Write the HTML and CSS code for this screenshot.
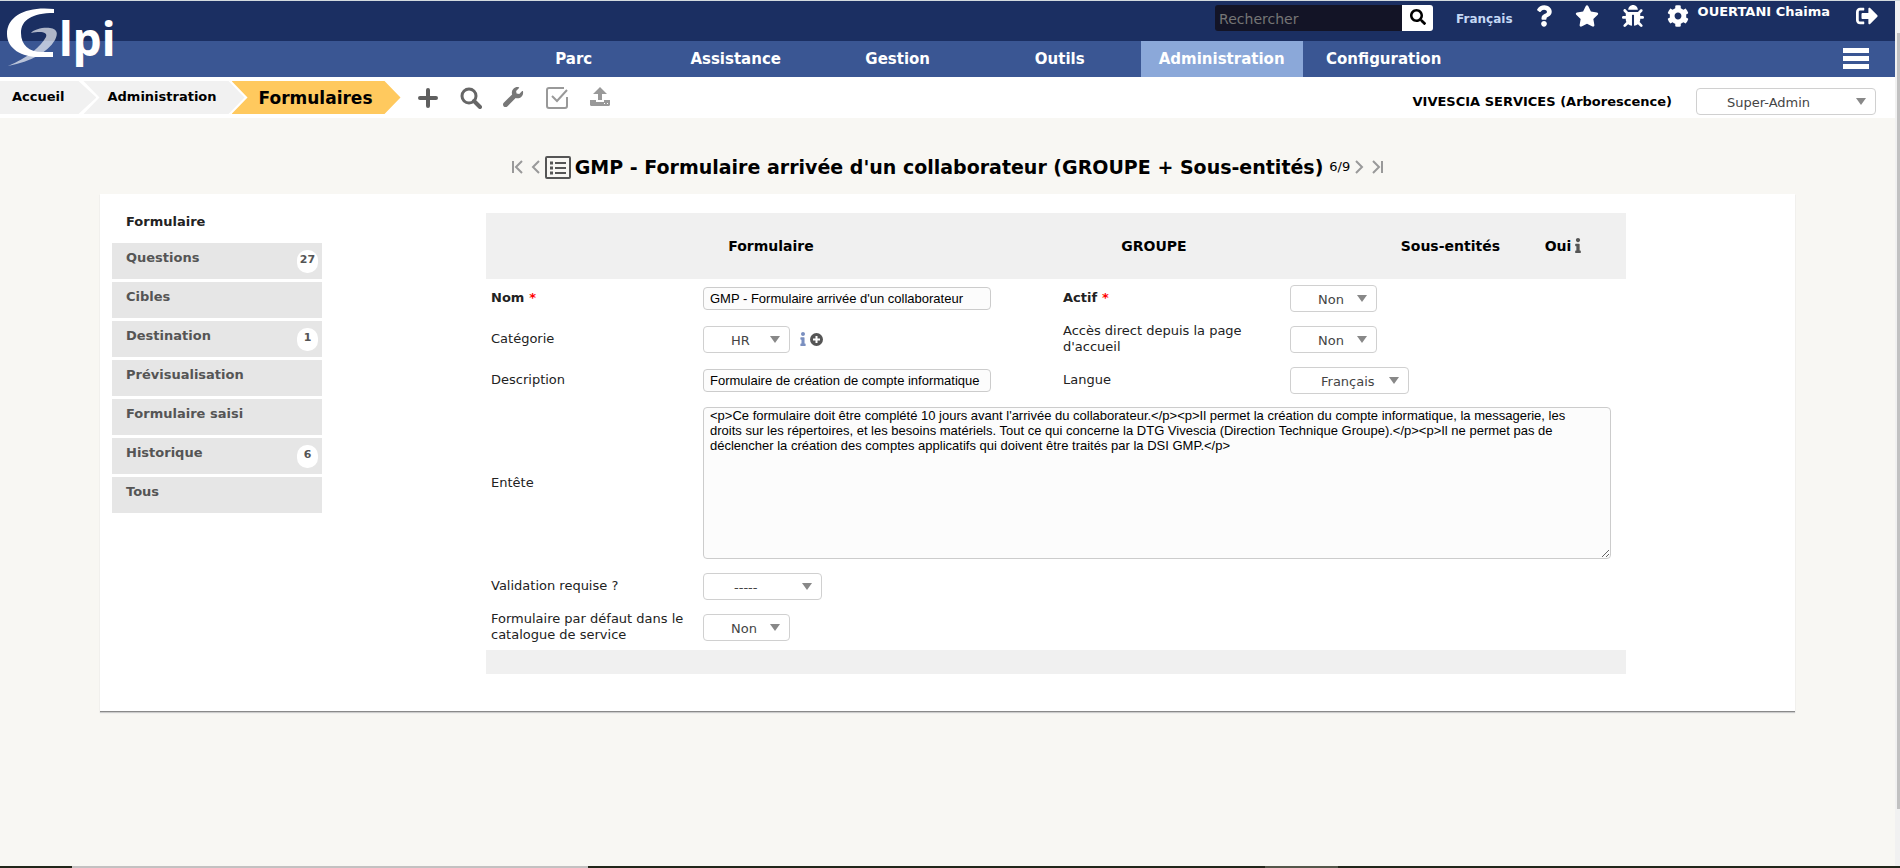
FILE: index.html
```html
<!DOCTYPE html>
<html lang="fr">
<head>
<meta charset="utf-8">
<title>GLPI - Formulaires</title>
<link rel="stylesheet" href="styles.css">
</head>
<body>
<div class="window">
<div class="page">
  <header class="header">
    <div class="topbar">
      <a href="#" class="logo" aria-label="Glpi">
        <svg viewBox="0 1 120 70" width="120" height="70">
          <path d="M54 9C28 6 7 15 7 34c0 15 15 23 32 23h14v-5H42C29 52 21 45 21 33c0-13 11-20 33-20z" fill="#fff"/>
          <path d="M31 33c3-4 13-6 19-5 8 1 8 6 5 12C47 53 32 61 8 66c20-8 33-20 38-29 2-5-5-6-15-4z" fill="#fff" opacity=".65"/>
          <text class="logo-text" x="59" y="56">lpi</text>
        </svg>
      </a>
      <form class="search">
        <input type="text" class="search-input" placeholder="Rechercher" aria-label="Rechercher">
        <button type="button" class="search-button" aria-label="Lancer la recherche"><svg viewBox="0 0 512 512" width="16" height="16"><path d="M505 442.700L405.300 343c-4.500-4.500-10.600-7-17-7H372c27.600-35.300 44-79.700 44-128C416 93.100 322.900 0 208 0S0 93.100 0 208s93.100 208 208 208c48.300 0 92.700-16.400 128-44v16.300c0 6.400 2.500 12.500 7 17l99.700 99.700c9.400 9.400 24.600 9.400 33.900 0l28.300-28.300c9.400-9.400 9.400-24.600.1-34zM208 336c-70.700 0-128-57.200-128-128 0-70.700 57.200-128 128-128 70.700 0 128 57.200 128 128 0 70.700-57.200 128-128 128z"/></svg></button>
      </form>
      <a href="#" class="language">Français</a>
      <div class="tools">
        <a href="#" class="tool" aria-label="Aide"><svg viewBox="0 0 384 512" width="16" height="22"><path d="M202.021 0C122.202 0 70.503 32.703 29.914 91.026c-7.363 10.580-5.093 25.086 5.178 32.874l43.138 32.709c10.373 7.865 25.132 6.026 33.253-4.148 25.049-31.381 43.630-49.449 82.757-49.449 30.764 0 68.816 19.799 68.816 49.631 0 22.552-18.617 34.134-48.993 51.164-35.423 19.860-82.299 44.576-82.299 106.405V320c0 13.255 10.745 24 24 24h72.471c13.255 0 24-10.745 24-24v-5.773c0-42.860 125.268-44.645 125.268-160.627C377.504 66.256 286.902 0 202.021 0zM192 373.459c-38.196 0-69.271 31.075-69.271 69.271 0 38.195 31.075 69.270 69.271 69.270s69.271-31.075 69.271-69.271-31.075-69.270-69.271-69.270z"/></svg></a>
        <a href="#" class="tool" aria-label="Marque-pages"><svg viewBox="0 0 576 512" width="24" height="22"><path d="M259.300 17.800L194 150.200 47.900 171.500c-26.200 3.800-36.700 36.100-17.700 54.600l105.700 103-25 145.500c-4.500 26.300 23.200 46 46.400 33.700L288 439.600l130.700 68.700c23.200 12.200 50.900-7.400 46.400-33.700l-25-145.500 105.700-103c19-18.500 8.500-50.800-17.700-54.600L382 150.200 316.700 17.800c-11.700-23.600-45.600-23.900-57.400 0z"/></svg></a>
        <a href="#" class="tool" aria-label="Mode debug"><svg viewBox="0 0 512 512" width="22" height="22"><path d="M511.988 288.900c-.478 17.430-15.217 31.100-32.653 31.100H424v16c0 21.864-4.882 42.584-13.600 61.145l60.228 60.228c12.496 12.497 12.496 32.758 0 45.255-12.498 12.497-32.759 12.496-45.256 0l-54.736-54.736C345.886 467.965 314.351 480 280 480V236c0-6.627-5.373-12-12-12h-24c-6.627 0-12 5.373-12 12v244c-34.351 0-65.886-12.035-90.636-32.108l-54.736 54.736c-12.498 12.497-32.759 12.496-45.256 0-12.496-12.497-12.496-32.758 0-45.255l60.228-60.228C92.882 378.584 88 357.864 88 336v-16H32.666C15.230 320 .491 306.330.013 288.900-.484 270.816 14.028 256 32 256h56v-58.745l-46.628-46.628c-12.496-12.497-12.496-32.758 0-45.255 12.498-12.497 32.758-12.497 45.256 0L141.255 160h229.489l54.627-54.627c12.498-12.497 32.758-12.497 45.256 0 12.496 12.497 12.496 32.758 0 45.255L424 197.255V256h56c17.972 0 32.484 14.816 31.988 32.900zM257 0c-61.856 0-112 50.144-112 112h224C369 50.144 318.856 0 257 0z"/></svg></a>
        <a href="#" class="user"><svg viewBox="0 0 512 512" width="22" height="22"><path d="M487.400 315.700l-42.600-24.600c4.300-23.200 4.300-47 0-70.200l42.600-24.600c4.900-2.800 7.100-8.600 5.500-14-11.100-35.600-30-67.800-54.700-94.600-3.800-4.100-10-5.100-14.800-2.300L380.800 110c-17.900-15.400-38.500-27.300-60.800-35.100V25.800c0-5.600-3.900-10.500-9.400-11.700-36.700-8.200-74.300-7.800-109.200 0-5.500 1.200-9.400 6.100-9.400 11.700V75c-22.200 7.900-42.800 19.800-60.800 35.100L88.700 85.500c-4.900-2.800-11-1.900-14.800 2.300-24.700 26.700-43.600 58.900-54.700 94.600-1.700 5.400.6 11.200 5.500 14L67.300 221c-4.300 23.200-4.300 47 0 70.200l-42.600 24.600c-4.900 2.800-7.100 8.600-5.500 14 11.100 35.600 30 67.800 54.700 94.600 3.800 4.100 10 5.100 14.800 2.300l42.600-24.600c17.900 15.400 38.500 27.300 60.800 35.100v49.200c0 5.600 3.900 10.500 9.400 11.700 36.700 8.200 74.300 7.800 109.200 0 5.500-1.200 9.400-6.100 9.400-11.700v-49.200c22.200-7.900 42.800-19.800 60.800-35.100l42.600 24.600c4.900 2.800 11 1.900 14.800-2.300 24.700-26.700 43.600-58.900 54.700-94.600 1.500-5.500-.7-11.300-5.600-14.100zM256 336c-44.100 0-80-35.900-80-80s35.900-80 80-80 80 35.900 80 80-35.900 80-80 80z"/></svg><span class="user-name">OUERTANI Chaima</span></a>
        <a href="#" class="tool" aria-label="Déconnexion"><svg viewBox="0 0 512 512" width="22" height="22"><path d="M497 273L329 441c-15 15-41 4.500-41-17v-96H152c-13.300 0-24-10.700-24-24v-96c0-13.300 10.700-24 24-24h136V88c0-21.400 25.900-32 41-17l168 168c9.300 9.400 9.300 24.600 0 34zM192 436v-40c0-6.600-5.400-12-12-12H96c-17.700 0-32-14.300-32-32V160c0-17.700 14.300-32 32-32h84c6.600 0 12-5.400 12-12V76c0-6.600-5.400-12-12-12H96c-53 0-96 43-96 96v192c0 53 43 96 96 96h84c6.600 0 12-5.400 12-12z"/></svg></a>
      </div>
    </div>
    <nav class="nav">
      <a href="#">Parc</a>
      <a href="#">Assistance</a>
      <a href="#">Gestion</a>
      <a href="#">Outils</a>
      <a href="#" class="active">Administration</a>
      <a href="#">Configuration</a>
      <button type="button" class="burger" aria-label="Menu"><svg viewBox="0 0 26 22" width="26" height="22"><path d="M0 0h26v5H0zM0 8h26v5H0zM0 16h26v5H0z" fill="#fff"/></svg></button>
    </nav>
  </header>

  <div class="context">
    <nav class="crumbs">
      <a href="#" class="crumb first">Accueil</a>
      <a href="#" class="crumb">Administration</a>
      <a href="#" class="crumb current">Formulaires</a>
    </nav>
    <div class="actions">
      <a href="#" aria-label="Ajouter"><svg viewBox="0 0 22 22" width="22" height="22"><path d="M11 3v16M3 11h16" stroke="#5f5f5f" stroke-width="4" stroke-linecap="round"/></svg></a>
      <a href="#" aria-label="Rechercher"><svg viewBox="0 0 22 22" width="22" height="22"><circle cx="9" cy="9" r="7" fill="none" stroke="#666" stroke-width="3"/><path d="M14 14l6 6" stroke="#666" stroke-width="4" stroke-linecap="round"/></svg></a>
      <a href="#" aria-label="Configurer"><svg viewBox="0 0 560 560" width="22" height="22"><path fill="#777" d="M507.730 109.100c-2.240-9.030-13.540-12.090-20.120-5.510l-74.360 74.360-67.880-11.310-11.310-67.880 74.360-74.360c6.620-6.620 3.430-17.900-5.660-20.160-47.380-11.740-99.550.91-136.580 37.930-39.640 39.640-50.550 97.100-34.050 147.200L18.740 402.760c-24.990 24.990-24.990 65.510 0 90.500 24.990 24.990 65.510 24.990 90.500 0l213.210-213.210c50.120 16.710 107.470 5.680 147.370-34.220 37.070-37.070 49.700-89.320 37.910-136.730z"/></svg></a>
      <a href="#" aria-label="Valider"><svg viewBox="0 0 22 22" width="22" height="22" fill="none" stroke="#999" stroke-width="2"><path d="M18 1H3a2 2 0 0 0-2 2v16a2 2 0 0 0 2 2h16a2 2 0 0 0 2-2v-9"/><path d="M6 9l5 5L21 3"/></svg></a>
      <a href="#" aria-label="Exporter"><svg viewBox="0 0 22 22" width="22" height="22" fill="#999"><path d="M11 0l7 7h-5v6H9V7H4z"/><path fill-rule="evenodd" d="M1 13h6v2h8v-2h6v5a2 2 0 0 1-1 1H2a2 2 0 0 1-1-1zM15 16v1h1v-1zM18 16v1h1v-1z"/></svg></a>
    </div>
    <a href="#" class="entity">VIVESCIA SERVICES (Arborescence)</a>
    <select class="select profile" aria-label="Profil"><option>Super-Admin</option></select>
  </div>

  <main class="main">
    <div class="title-row">
      <a href="#" class="pager" aria-label="Premier"><svg viewBox="0 0 12 14" width="12" height="14"><path d="M1 1v12M10 1L4 7l6 6"/></svg></a>
      <a href="#" class="pager" aria-label="Précédent"><svg viewBox="0 0 12 14" width="12" height="14"><path d="M9 1L3 7l6 6"/></svg></a>
      <svg class="title-icon" viewBox="0 0 26 23" width="26" height="23"><rect x="1" y="1" width="24" height="21" rx="1" fill="none" stroke="#555" stroke-width="2"/><path d="M10 7h11M10 12h11M10 17h11" stroke="#555" stroke-width="2"/><path d="M5 7h3M5 12h3M5 17h3" stroke="#555" stroke-width="3"/></svg>
      <h1 class="title">GMP - Formulaire arrivée d'un collaborateur (GROUPE + Sous-entités)</h1>
      <span class="count">6/9</span>
      <a href="#" class="pager" aria-label="Suivant"><svg viewBox="0 0 12 14" width="12" height="14"><path d="M3 1l6 6-6 6"/></svg></a>
      <a href="#" class="pager" aria-label="Dernier"><svg viewBox="0 0 12 14" width="12" height="14"><path d="M2 1l6 6-6 6M11 1v12"/></svg></a>
    </div>

    <section class="panel">
      <nav class="tabs">
        <a href="#" class="tab selected">Formulaire</a>
        <a href="#" class="tab">Questions<span class="badge">27</span></a>
        <a href="#" class="tab">Cibles</a>
        <a href="#" class="tab">Destination<span class="badge">1</span></a>
        <a href="#" class="tab">Prévisualisation</a>
        <a href="#" class="tab">Formulaire saisi</a>
        <a href="#" class="tab">Historique<span class="badge">6</span></a>
        <a href="#" class="tab">Tous</a>
      </nav>

      <div class="content">
      <form class="form">
        <div class="form-head">
          <span>Formulaire</span>
          <span>GROUPE</span>
          <span class="sub">Sous-entités</span>
          <span class="yes">Oui <svg viewBox="0 0 192 512" width="6" height="15" fill="#555"><path d="M20 424.229h20V279.771H20c-11.046 0-20-8.954-20-20V212c0-11.046 8.954-20 20-20h112c11.046 0 20 8.954 20 20v212.229h20c11.046 0 20 8.954 20 20V492c0 11.046-8.954 20-20 20H20c-11.046 0-20-8.954-20-20v-47.771c0-11.046 8.954-20 20-20zM96 0C56.235 0 24 32.235 24 72s32.235 72 72 72 72-32.235 72-72S135.764 0 96 0z"/></svg></span>
        </div>
        <div class="fields">
          <label for="nom" class="required">Nom <em>*</em></label>
          <div><input id="nom" class="text" type="text" value="GMP - Formulaire arrivée d'un collaborateur"></div>
          <label for="actif" class="required">Actif <em>*</em></label>
          <div><select id="actif" class="select small"><option>Non</option></select></div>

          <label for="categorie">Catégorie</label>
          <div class="with-icons"><select id="categorie" class="select small"><option>HR</option></select>
            <a href="#" class="mini info" aria-label="Information"><svg viewBox="0 0 192 512" width="6" height="14" fill="#7a8fc0"><path d="M20 424.229h20V279.771H20c-11.046 0-20-8.954-20-20V212c0-11.046 8.954-20 20-20h112c11.046 0 20 8.954 20 20v212.229h20c11.046 0 20 8.954 20 20V492c0 11.046-8.954 20-20 20H20c-11.046 0-20-8.954-20-20v-47.771c0-11.046 8.954-20 20-20zM96 0C56.235 0 24 32.235 24 72s32.235 72 72 72 72-32.235 72-72S135.764 0 96 0z"/></svg></a>
            <a href="#" class="mini" aria-label="Ajouter une catégorie"><svg viewBox="0 0 13 13" width="13" height="13"><circle cx="6.500" cy="6.500" r="6.500" fill="#555"/><path d="M6.500 3v7M3 6.500h7" stroke="#fff" stroke-width="2"/></svg></a></div>
          <label for="acces">Accès direct depuis la page d'accueil</label>
          <div><select id="acces" class="select small"><option>Non</option></select></div>

          <label for="description">Description</label>
          <div><input id="description" class="text" type="text" value="Formulaire de création de compte informatique"></div>
          <label for="langue">Langue</label>
          <div><select id="langue" class="select medium"><option>Français</option></select></div>

          <label for="entete">Entête</label>
          <div class="wide tall"><textarea id="entete" class="text area">&lt;p&gt;Ce formulaire doit être complété 10 jours avant l'arrivée du collaborateur.&lt;/p&gt;&lt;p&gt;Il permet la création du compte informatique, la messagerie, les droits sur les répertoires, et les besoins matériels. Tout ce qui concerne la DTG Vivescia (Direction Technique Groupe).&lt;/p&gt;&lt;p&gt;Il ne permet pas de déclencher la création des comptes applicatifs qui doivent être traités par la DSI GMP.&lt;/p&gt;</textarea></div>

          <label for="validation">Validation requise ?</label>
          <div class="wide"><select id="validation" class="select medium"><option>-----</option></select></div>

          <label for="defaut">Formulaire par défaut dans le catalogue de service</label>
          <div class="wide"><select id="defaut" class="select small"><option>Non</option></select></div>
        </div>
        <div class="form-foot"></div>
      </form>
      </div>
    </section>
  </main>
</div>
<div class="scrollbar"><div class="thumb"></div></div>
</div>
<div class="taskbar"></div>
</body>
</html>
```

FILE: styles.css
```css
* { box-sizing: border-box; }

body {
  margin: 0;
  min-height: 100vh;
  display: flex;
  flex-direction: column;
  background: #f8f7f3;
  color: #222;
  font: 13px/16px Verdana, "DejaVu Sans", sans-serif;
}

a { color: inherit; text-decoration: none; }
button, input, select, textarea { font: inherit; margin: 0; }
svg { display: block; flex: none; }

.window { flex: 1; display: flex; border-top: 1px solid #d3dade; }
.page { flex: 1; min-width: 0; }
.scrollbar { width: 5px; padding: 32px 0 57px 2px; background: #f1f1f1; display: flex; }
.thumb { flex: 1; background: #c1c1c1; }
.taskbar {
  height: 2px;
  background: linear-gradient(90deg, #22261a 72px, #c3c1c1 72px, #c3c1c1 588px, #22261a 588px, #22261a 1265px, #55574a 1265px, #55574a 1338px, #22261a 1338px);
}

/* Header */
.topbar { position: relative; height: 40px; padding: 4px 17px 0 0; display: flex; align-items: flex-start; justify-content: flex-end; background: #1b2f62; }
.logo { position: absolute; left: 0; top: 0; }
.logo-text { font: bold 46px "Noto Sans", sans-serif; fill: #fff; }
.search { display: flex; height: 26px; width: 218px; border-radius: 3px; overflow: hidden; }
.search-input { flex: 1; min-width: 0; padding: 2px 4px 0; border: 0; background: #131426; color: #ccc; font-size: 14px; }
.search-input::placeholder { color: #757575; opacity: 1; }
.search-button { width: 31px; padding: 0 0 2px; border: 0; background: #fff; display: flex; align-items: center; justify-content: center; }
.language { margin: 6px 23px 0; color: #c5d8f5; font-size: 12px; font-weight: bold; }
.tools { display: flex; gap: 23px; color: #fff; fill: #fff; }
.user { display: flex; gap: 9px; margin-right: 3px; font-weight: bold; font-size: 13px; line-height: 14px; }

.nav { height: 36px; padding: 0 26px 0 26%; display: flex; align-items: stretch; background: #3a5693; }
.nav a { width: 162px; color: #fff; font-size: 15px; font-weight: bold; line-height: 36px; text-align: center; }
.nav .active { background: #8ba8d9; }
.burger { margin-left: auto; padding: 0; border: 0; background: none; align-self: center; }

/* Breadcrumb */
.context { display: flex; align-items: center; height: 41px; padding-right: 19px; background: #fff; color: #000; }
.crumbs { display: flex; font-weight: bold; line-height: 32px; }
.crumb { height: 33px; padding: 0 28px 0 24px; background: #f1f1f1; clip-path: polygon(0 0, calc(100% - 16px) 0, 100% 50%, calc(100% - 16px) 100%, 0 100%, 16px 50%); }
.crumb + .crumb { margin-left: -13px; }
.crumb.first { padding: 0 32px 0 12px; clip-path: polygon(0 0, calc(100% - 18px) 0, 100% 50%, calc(100% - 18px) 100%, 0 100%); }
.crumb.current { padding-left: 27px; background: #ffc95e; font-size: 17px; line-height: 34px; }
.actions { display: flex; gap: 21px; margin-left: 16px; }
.entity { margin-left: auto; padding-top: 8px; font-weight: bold; }

/* Form controls */
.select {
  height: 27px;
  padding: 3px 24px 0 27px;
  border: 1px solid #d0d0d0;
  border-radius: 4px;
  appearance: none;
  background: #fff url("data:image/svg+xml,%3Csvg xmlns='http://www.w3.org/2000/svg' width='10' height='7'%3E%3Cpath d='M0 0h10L5 7z' fill='%23888'/%3E%3C/svg%3E") no-repeat right 9px center;
  color: #444;
}
.small { width: 87px; }
.medium { width: 119px; padding-left: 30px; }
.profile { width: 180px; margin: 7px 0 0 24px; padding-left: 30px; }
.text {
  display: block;
  width: 288px;
  height: 23px;
  padding: 0 6px;
  border: 1px solid #ccc;
  border-radius: 4px;
  background: #fcfcfc;
  color: #000;
  font: 13px/15px Arial, "Liberation Sans", sans-serif;
}
.area { width: 100%; height: 152px; padding-right: 23px; }

/* Title */
.title-row { height: 76px; padding-top: 22px; display: flex; align-items: center; justify-content: center; }
.pager { padding: 0 3px; }
.pager svg { fill: none; stroke: #999; stroke-width: 2; }
.title { margin: 0 6px 0 4px; color: #000; font-size: 19px; line-height: 24px; }
.count { color: #000; }

/* Panel */
.panel {
  display: flex;
  margin: 0 100px;
  padding: 19px 0 37px 12px;
  border-bottom: 1px solid #8a8a8a;
  background: #fff;
  box-shadow: 0 1px 1px #ccc;
}
.tabs { width: 210px; display: flex; flex-direction: column; gap: 3px; }
.tab { height: 36px; padding: 7px 4px 0 14px; display: flex; align-items: flex-start; justify-content: space-between; background: #e6e6e6; color: #555; font-weight: bold; }
.tab.selected { height: 27px; padding-top: 1px; background: none; color: #222; }
.badge { width: 21px; height: 23px; border-radius: 10px; background: #fff; font-size: 11px; line-height: 20px; text-align: center; }

.content { flex: 1; padding: 0 169px 0 164px; }
.form-head { display: grid; grid-template-columns: 570fr 196fr 248fr 126fr; align-items: center; height: 66px; background: #f0f0f0; color: #000; font-size: 14px; font-weight: bold; text-align: center; }
.sub { text-align: right; }
.yes { display: flex; justify-content: center; gap: 4px; }
.fields { display: grid; grid-template-columns: 212fr 360fr 227fr 321fr; row-gap: 5px; align-items: center; padding: 1px 15px 5px 5px; }
.fields > * { min-height: 36px; display: flex; align-items: center; }
.fields label { padding-right: 10px; }
.fields .wide { grid-column: 2 / -1; }
.fields .tall { min-height: 160px; }
.required { font-weight: bold; }
.required em { margin-left: 5px; color: #f00; font-style: normal; }
.with-icons { gap: 4px; }
.info { margin-left: 6px; }
.form-foot { height: 24px; background: #f0f0f0; }
```
